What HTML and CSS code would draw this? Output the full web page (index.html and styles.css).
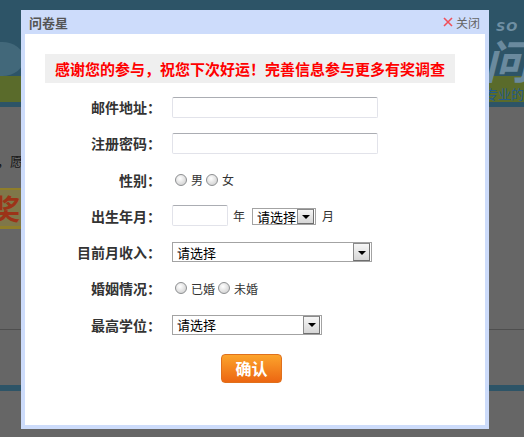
FILE: index.html
```html
<!DOCTYPE html>
<html lang="zh-CN">
<head>
<meta charset="utf-8">
<title>问卷星</title>
<link rel="stylesheet" href="styles.css">
</head>
<body>
<div class="page">
  <header class="top">
    <div class="cloud"></div>
    <div class="grass"></div>
    <div class="logo">
      <span class="logo-so">SO</span>
      <span class="logo-mark">问</span>
      <span class="logo-tag">专业的</span>
    </div>
  </header>
  <main class="content">
    <p class="intro">，愿</p>
    <div class="prize">奖</div>
    <div class="rule"></div>
    <div class="band"></div>
  </main>
</div>

<div class="dialog">
  <div class="dlg-head">
    <span class="dlg-title">问卷星</span>
    <span class="dlg-close">
      <svg class="x-icon" width="10" height="10" viewBox="0 0 10 10"><path d="M1 1 L9 9 M9 1 L1 9" stroke="#f0505a" stroke-width="1.6" fill="none"/></svg>关闭
    </span>
  </div>
  <div class="dlg-body">
    <div class="notice">感谢您的参与，祝您下次好运！完善信息参与更多有奖调查</div>
    <div class="form">
      <div class="lbl">邮件地址：</div>
      <div class="ctl"><input class="txt txt-long" type="text"></div>

      <div class="lbl">注册密码：</div>
      <div class="ctl"><input class="txt txt-long" type="password"></div>

      <div class="lbl">性别：</div>
      <div class="ctl"><span class="radio"></span><span class="opt">男</span><span class="radio"></span><span class="opt">女</span></div>

      <div class="lbl">出生年月：</div>
      <div class="ctl">
        <input class="txt txt-year" type="text"><span class="unit">年</span>
        <span class="sel sel-month"><span class="sel-text">请选择</span><span class="sel-btn"><i class="tri"></i></span></span><span class="unit unit-m">月</span>
      </div>

      <div class="lbl">目前月收入：</div>
      <div class="ctl"><span class="sel sel-income"><span class="sel-text">请选择</span><span class="sel-btn"><i class="tri"></i></span></span></div>

      <div class="lbl">婚姻情况：</div>
      <div class="ctl"><span class="radio"></span><span class="opt">已婚</span><span class="radio"></span><span class="opt">未婚</span></div>

      <div class="lbl">最高学位：</div>
      <div class="ctl"><span class="sel sel-degree"><span class="sel-text">请选择</span><span class="sel-btn"><i class="tri"></i></span></span></div>
    </div>
    <div class="actions"><button class="btn" type="button">确认</button></div>
  </div>
</div>
</body>
</html>
```

FILE: styles.css
```css
* { box-sizing: border-box; }
html, body { margin: 0; padding: 0; }
body {
  width: 524px;
  height: 437px;
  overflow: hidden;
  background: #666666;
  font-family: "Noto Sans CJK SC", "Noto Sans", sans-serif;
  position: relative;
}
.page { height: 437px; }

/* darkened page behind the dialog */
.top {
  position: relative;
  height: 107px;
  background: #2d5467;
  overflow: hidden;
}
.cloud {
  position: absolute;
  left: -20px;
  top: 42px;
  width: 44px;
  height: 34px;
  border-radius: 50%;
  background: #42687a;
}
.grass {
  position: absolute;
  left: 0;
  right: 0;
  top: 76px;
  height: 26px;
  background: #5a6b2b;
}
.logo {
  position: absolute;
  right: 0;
  top: 18px;
  width: 50px;
  height: 84px;
}
.logo-so {
  position: absolute;
  left: 22px;
  top: 2px;
  font: italic bold 13px/14px "DejaVu Sans", sans-serif;
  color: #6f8fa3;
  letter-spacing: 1px;
}
.logo-mark {
  position: absolute;
  left: 10px;
  top: 16px;
  font-size: 46px;
  font-weight: bold;
  font-style: italic;
  line-height: 50px;
  color: #6a8a9e;
}
.logo-tag {
  position: absolute;
  right: 0;
  top: 68px;
  font-size: 13px;
  line-height: 15px;
  color: #245a8c;
  white-space: nowrap;
}
.intro {
  margin: 44px 0 0 -3px;
  font-size: 13px;
  line-height: 20px;
  color: #161616;
}
.prize {
  margin: 17px 0 0 -8px;
  width: 60px;
  height: 41px;
  border-top: 2px solid #8f7e2a;
  border-bottom: 3px solid #8f7e2a;
  background: #7f7749;
  color: #9c3318;
  font-size: 28px;
  font-weight: bold;
  line-height: 36px;
}
.rule {
  margin-top: 100px;
  height: 1px;
  background: #4e4e4e;
}
.band {
  margin-top: 55px;
  height: 6px;
  background: #2d5467;
}

/* dialog */
.dialog {
  position: absolute;
  left: 21px;
  top: 10px;
  width: 468px;
  height: 419px;
  background: #cddcfb;
  padding: 0 4px 4px;
  display: flex;
  flex-direction: column;
}
.dlg-head {
  height: 24px;
  display: flex;
  align-items: center;
  justify-content: space-between;
  padding: 0 5px 0 4px;
}
.dlg-title {
  font-size: 13px;
  font-weight: bold;
  color: #555555;
}
.dlg-close {
  display: flex;
  align-items: center;
  font-size: 12px;
  color: #666666;
}
.x-icon { margin-right: 3px; }
.dlg-body {
  flex: 1;
  background: #ffffff;
  padding: 20px 30px 0 20px;
}
.notice {
  height: 29px;
  line-height: 29px;
  background: #efefef;
  color: #ff0000;
  font-size: 15px;
  font-weight: bold;
  text-align: center;
  white-space: nowrap;
}
.form {
  margin-top: 6px;
  display: grid;
  grid-template-columns: 117px 1fr;
  grid-auto-rows: 36.25px;
  column-gap: 10px;
}
.lbl {
  display: flex;
  align-items: center;
  justify-content: flex-end;
  padding-right: 1px;
  font-size: 14px;
  font-weight: bold;
  color: #333333;
  white-space: nowrap;
}
.ctl {
  display: flex;
  align-items: center;
  font-size: 12px;
  color: #333333;
}
.txt {
  height: 21px;
  margin: 0;
  padding: 0 3px;
  border: 1px solid #e2e3ea;
  border-top-color: #abadb3;
  border-radius: 2px;
  background: #ffffff;
  font: 13px "Noto Sans CJK SC", sans-serif;
  outline: none;
}
.txt-long { width: 206px; }
.txt-year { width: 56px; }
.unit { margin-left: 5px; }
.unit-m { margin-left: 6px; }
.sel {
  display: inline-flex;
  align-items: stretch;
  border: 1px solid #a3a3a3;
  background: #ffffff;
  font-size: 13px;
  color: #000000;
}
.sel-text {
  flex: 1;
  display: flex;
  align-items: center;
  padding-left: 4px;
  white-space: nowrap;
}
.sel-btn {
  width: 17px;
  margin-right: 1px;
  border: 1px solid #8a8a8a;
  border-right-color: #6e6e6e;
  border-bottom-color: #6e6e6e;
  background: linear-gradient(#f6f6f6, #d6d6d6);
  display: flex;
  align-items: center;
  justify-content: center;
}
.tri {
  width: 0;
  height: 0;
  border-left: 4px solid transparent;
  border-right: 4px solid transparent;
  border-top: 4px solid #000000;
  margin-top: 1px;
}
.sel-month { width: 64px; height: 17px; margin-left: 7px; margin-top: 2px; }
.sel-income { width: 200px; height: 20px; }
.sel-degree { width: 150px; height: 20px; }
.radio {
  width: 12px;
  height: 12px;
  margin: 0 4px 0 3px;
  border-radius: 50%;
  border: 1px solid #8d8f91;
  background: radial-gradient(circle at 40% 35%, #ffffff 0, #e6e6e6 45%, #c9c9c9 100%);
}
.opt + .radio { margin-left: 3px; }
.opt { color: #333333; }
.actions {
  display: flex;
  justify-content: center;
  padding-left: 3px;
  margin-top: 11px;
}
.btn {
  width: 61px;
  height: 29px;
  padding: 0;
  border: 1px solid #e0701c;
  border-radius: 4px;
  background: linear-gradient(#fca42c, #ec6612);
  color: #ffffff;
  font: bold 16px "Noto Sans CJK SC", sans-serif;
  line-height: 27px;
}
```
